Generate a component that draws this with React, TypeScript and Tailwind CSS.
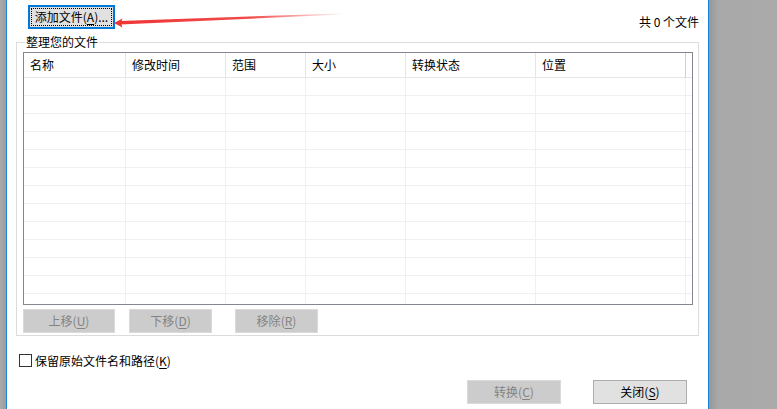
import React from 'react';

const cols = ['名称', '修改时间', '范围', '大小', '转换状态', '位置', ''];

const U: React.FC<{ k: string }> = ({ k }) => <span className="underline underline-offset-2">{k}</span>;

const DisabledBtn: React.FC<{ w: string; label: string; k: string }> = ({ w, label, k }) => (
    <div className={`${w} h-[24px] flex items-center justify-center bg-[#cccccc] border border-[#dadada] text-[#838383]`}>
        {label}(<U k={k} />)
    </div>
);

export default function App() {
    return (
        <div
            className="relative w-[777px] h-[409px] flex overflow-hidden text-[12px] leading-[16px] text-black"
            style={{ fontFamily: '"Noto Sans CJK SC", "Liberation Sans", sans-serif' }}
        >
            {/* left outside strip */}
            <div className="w-[6px] h-full bg-[linear-gradient(to_right,#a8a8a8,#9c9c9c)]" />
            <div className="w-[1px] h-full bg-[#1883d7]" />

            {/* dialog body */}
            <div className="w-[701px] h-full bg-white flex flex-col">
                <div className="h-[29px] flex items-start justify-between">
                    <div className="ml-[21px] mt-[5px] w-[87px] h-[24px] border-2 border-[#0078d7] bg-[#e1e1e1] p-[1px] flex">
                        <div className="flex-1 border border-dotted border-black flex items-center justify-center">
                            添加文件(<U k="A" />)...
                        </div>
                    </div>
                    <span className="mt-[14px] mr-[9px]">共 0 个文件</span>
                </div>

                <div className="relative ml-[9px] mt-[13px] w-[683px] border border-[#dcdcdc] pt-[9px] pl-[6px] pr-[5px] pb-[2px]">
                    <span className="absolute -top-[9px] left-[8px] bg-white px-[1px]">整理您的文件</span>

                    <div className="h-[253px] border border-[#828790] overflow-hidden">
                        <div className="grid grid-cols-[102px_100px_80px_100px_130px_150px_6px]">
                            {cols.map((c, i) => (
                                <div
                                    key={c + i}
                                    className={`h-[25px] border-b border-[#e5e5e5] flex items-center pl-[6px] ${i < 6 ? 'border-r' : ''} ${i === 5 ? 'border-r-[#d0d0d0]' : ''}`}
                                >
                                    {c}
                                </div>
                            ))}
                            {Array.from({ length: 13 * 7 }).map((_, i) => (
                                <div
                                    key={i}
                                    className={`h-[18px] border-b border-[#f0f0f0] ${i % 7 < 6 ? 'border-r' : ''}`}
                                />
                            ))}
                        </div>
                    </div>

                    <div className="mt-[4px] flex">
                        <DisabledBtn w="w-[92px]" label="上移" k="U" />
                        <div className="ml-[14px]">
                            <DisabledBtn w="w-[83px]" label="下移" k="D" />
                        </div>
                        <div className="ml-[23px]">
                            <DisabledBtn w="w-[83px]" label="移除" k="R" />
                        </div>
                    </div>
                </div>

                <div className="mt-[18px] ml-[12px] h-[13px] flex items-center">
                    <div className="w-[13px] h-[13px] border border-[#333333] bg-white" />
                    <span className="ml-[3px]">保留原始文件名和路径(<U k="K" />)</span>
                </div>

                <div className="mt-[13px] mr-[21px] flex justify-end gap-[32px]">
                    <DisabledBtn w="w-[94px]" label="转换" k="C" />
                    <div className="w-[94px] h-[24px] flex items-center justify-center bg-[#e1e1e1] border border-[#adadad]">
                        关闭(<U k="S" />)
                    </div>
                </div>
            </div>

            <div className="w-[1px] h-full bg-[#1883d7]" />
            {/* right outside area */}
            <div className="flex-1 h-full bg-[linear-gradient(to_right,#979797,#a9a9a9_10px,#aaaaaa)]" />

            {/* red annotation arrow */}
            <svg className="absolute left-0 top-0 pointer-events-none" width="777" height="409" viewBox="0 0 777 409">
                <defs>
                    <linearGradient id="fade" x1="114" y1="0" x2="340" y2="0" gradientUnits="userSpaceOnUse">
                        <stop offset="0" stopColor="#ef3535" stopOpacity="1" />
                        <stop offset="0.6" stopColor="#f04040" stopOpacity="0.95" />
                        <stop offset="1" stopColor="#f04040" stopOpacity="0.05" />
                    </linearGradient>
                </defs>
                <polygon points="120,21 340,13.4 340,14.6 120,24.6" fill="url(#fade)" />
                <polygon points="114,23 122.5,18.5 121,23 122.5,27.5" fill="#ef3535" />
            </svg>
        </div>
    );
}
